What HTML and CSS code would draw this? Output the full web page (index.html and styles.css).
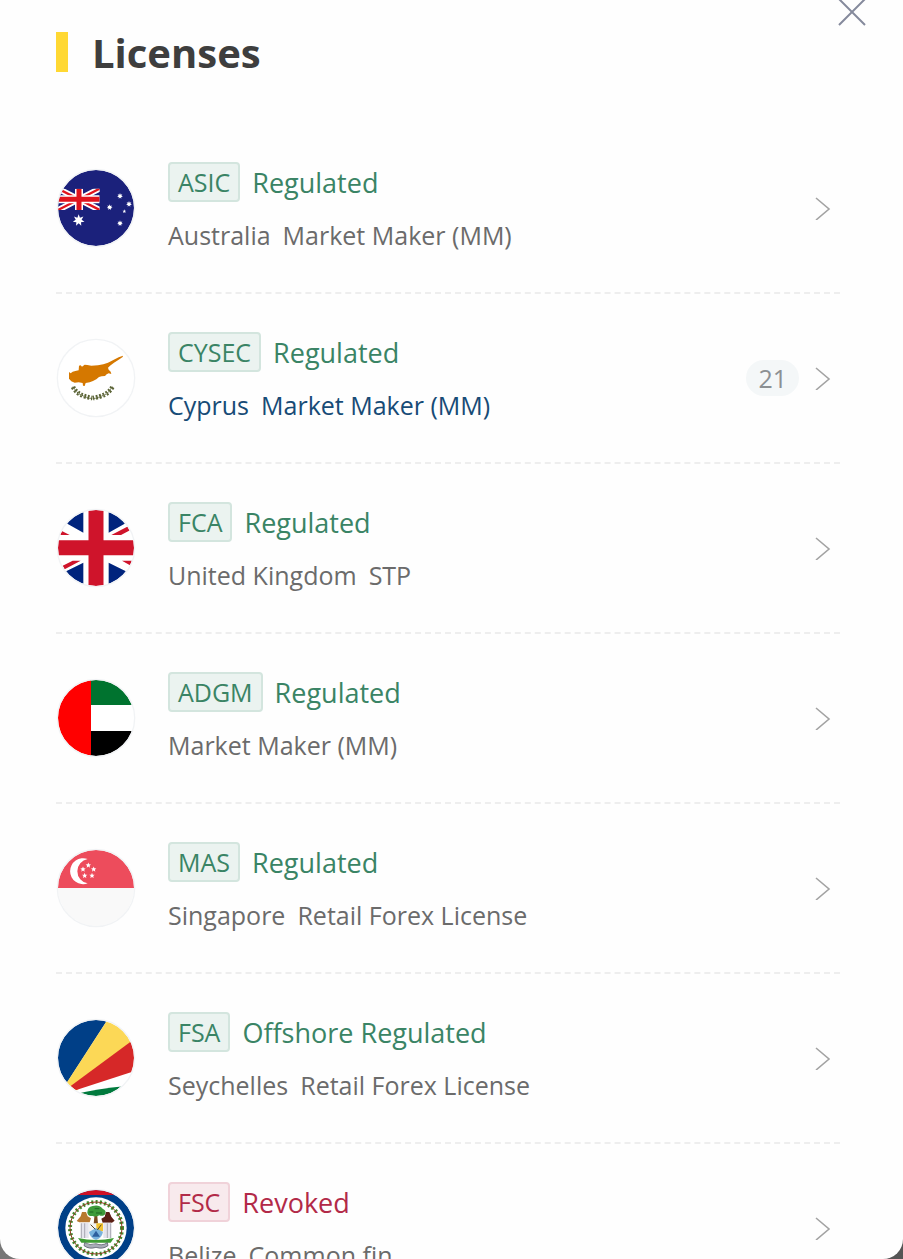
FILE: index.html
```html
<!DOCTYPE html>
<html lang="en">
<head>
    <meta charset="UTF-8">
    <meta name="viewport" content="width=device-width, initial-scale=1.0">
    <title>Licenses</title>
    <link rel="stylesheet" href="styles.css">
</head>
<body>
    <!-- shared shapes -->
    <svg class="sprite" aria-hidden="true">
        <defs>
            <clipPath id="round"><circle cx="138" cy="144" r="114"/></clipPath>
            <clipPath id="canton"><rect x="24" y="86" width="125" height="64"/></clipPath>
            <symbol id="arrow" viewBox="0 0 16 24">
                <path d="M1 2l13 11L1 24" fill="none" stroke="#a3a3a3" stroke-width="1.6"/>
            </symbol>
            <polygon id="star7" points="0,-18 3.9,-8.1 14.1,-11.2 8.8,-2 17.5,4 7,5.6 7.8,16.2 0,9 -7.8,16.2 -7,5.6 -17.5,4 -8.8,-2 -14.1,-11.2 -3.9,-8.1"/>
            <polygon id="star5" points="0,-8.5 2.3,-2.9 8,-2.6 3.6,1.2 5,7 0,3.8 -5,7 -3.6,1.2 -8,-2.6 -2.3,-2.9"/>
        </defs>
    </svg>

    <div class="dialog">
        <button class="close" type="button" aria-label="Close">
            <svg width="28" height="28" viewBox="0 0 28 28"><path d="M1 1l26 26M27 1L1 27" stroke="#858a9c" stroke-width="2"/></svg>
        </button>

        <h2 class="title">Licenses</h2>

        <div class="list">
            <a class="item" href="#asic">
                <svg class="flag" viewBox="18 24 240 240">
                    <g clip-path="url(#round)">
                        <rect x="18" y="24" width="240" height="240" fill="#1b217b"/>
                        <g clip-path="url(#canton)">
                            <path d="M24 86l125 64M149 86L24 150" stroke="#fff" stroke-width="18"/>
                            <path d="M24 86l125 64M149 86L24 150" stroke="#e0141e" stroke-width="7"/>
                            <path d="M87 86v64M24 118h125" stroke="#fff" stroke-width="24"/>
                            <path d="M87 86v64M24 118h125" stroke="#e0141e" stroke-width="15"/>
                        </g>
                        <g fill="#fff">
                            <use href="#star7" x="86" y="181"/>
                            <use href="#star7" transform="translate(210 108) scale(.5)"/>
                            <use href="#star7" transform="translate(179 142) scale(.5)"/>
                            <use href="#star7" transform="translate(237 132) scale(.5)"/>
                            <use href="#star7" transform="translate(210 190) scale(.5)"/>
                            <use href="#star5" transform="translate(223 154) scale(.7)"/>
                        </g>
                    </g>
                    <circle class="ring" cx="138" cy="144" r="116"/>
                </svg>
                <div class="info">
                    <div class="status"><span class="tag">ASIC</span><span>Regulated</span></div>
                    <div class="desc"><span>Australia</span><span>Market Maker (MM)</span></div>
                </div>
                <svg class="arrow"><use href="#arrow"/></svg>
            </a>

            <a class="item active" href="#cysec">
                <svg class="flag" viewBox="18 24 240 240">
                    <circle cx="138" cy="144" r="114" fill="#fff"/>
                    <path d="M57 126l5 4 6-5 8-2 10-2 1-14 5-1 4 4 8-6 8 1 12 2 20-1 16-3 14-5 16-8 16-8 13-5-1 4-12 8-14 9-12 9-6 6 2 6 6 6 2 7-8-2-6 3-5 5-10 1-8 2-8 7-10 5-10 4-12 2-3 9-5-1-1-8-12-2-12 1-10-4-7-8z" fill="#d57800"/>
                    <g fill="none" stroke="#5b6437">
                        <path d="M69 170q12 28 58 36M187 170q-12 28-58 36" stroke-width="3"/>
                        <path d="M69 171q14 27 58 33M187 171q-14 27-58 33" stroke-width="14" stroke-dasharray="6 5"/>
                    </g>
                    <path d="M72 176q14 22 50 27M184 176q-14 22-50 27" fill="none" stroke="#fff" stroke-width="2" stroke-dasharray="4 5"/>
                    <circle class="ring" cx="138" cy="144" r="116"/>
                </svg>
                <div class="info">
                    <div class="status"><span class="tag">CYSEC</span><span>Regulated</span></div>
                    <div class="desc"><span>Cyprus</span><span>Market Maker (MM)</span></div>
                </div>
                <span class="count">21</span>
                <svg class="arrow"><use href="#arrow"/></svg>
            </a>

            <a class="item" href="#fca">
                <svg class="flag" viewBox="18 24 240 240">
                    <g clip-path="url(#round)">
                        <rect x="18" y="24" width="240" height="240" fill="#fff"/>
                        <path d="M100 20v78L20 53V20zM176 20v78l80-45V20zM100 270v-82l-80 40v42zM176 270v-82l80 40v42z" fill="#00247d"/>
                        <path d="M34 92l25 13H20V86zM184 105l52-27 4 13-27 14zM38 197l30-15h24l-48 26zM216 182h42v24z" fill="#cf142b"/>
                        <path d="M138 24v240M18 143h240" stroke="#cf142b" stroke-width="45"/>
                    </g>
                    <circle class="ring" cx="138" cy="144" r="116"/>
                </svg>
                <div class="info">
                    <div class="status"><span class="tag">FCA</span><span>Regulated</span></div>
                    <div class="desc"><span>United Kingdom</span><span>STP</span></div>
                </div>
                <svg class="arrow"><use href="#arrow"/></svg>
            </a>

            <a class="item" href="#adgm">
                <svg class="flag" viewBox="18 24 240 240">
                    <g clip-path="url(#round)">
                        <rect x="18" y="24" width="240" height="240" fill="#fff"/>
                        <rect x="120" y="24" width="140" height="81" fill="#00732f"/>
                        <rect x="120" y="183" width="140" height="81" fill="#000"/>
                        <rect x="18" y="24" width="105" height="240" fill="#f00"/>
                    </g>
                    <circle class="ring" cx="138" cy="144" r="116"/>
                </svg>
                <div class="info">
                    <div class="status"><span class="tag">ADGM</span><span>Regulated</span></div>
                    <div class="desc"><span>Market Maker (MM)</span></div>
                </div>
                <svg class="arrow"><use href="#arrow"/></svg>
            </a>

            <a class="item" href="#mas">
                <svg class="flag" viewBox="18 24 240 240">
                    <g clip-path="url(#round)">
                        <rect x="18" y="24" width="240" height="240" fill="#f9f9f9"/>
                        <rect x="18" y="24" width="240" height="120" fill="#ed4c5c"/>
                        <path d="M113 57a39 39 0 1 0 0 73a37 37 0 0 1 0-73z" fill="#fff"/>
                        <g fill="#fff">
                            <use href="#star5" x="115" y="76"/>
                            <use href="#star5" x="99" y="88"/>
                            <use href="#star5" x="131" y="88"/>
                            <use href="#star5" x="104" y="107"/>
                            <use href="#star5" x="126" y="107"/>
                        </g>
                    </g>
                    <circle class="ring" cx="138" cy="144" r="116"/>
                </svg>
                <div class="info">
                    <div class="status"><span class="tag">MAS</span><span>Regulated</span></div>
                    <div class="desc"><span>Singapore</span><span>Retail Forex License</span></div>
                </div>
                <svg class="arrow"><use href="#arrow"/></svg>
            </a>

            <a class="item" href="#fsa">
                <svg class="flag" viewBox="18 24 240 240">
                    <g clip-path="url(#round)">
                        <rect x="18" y="24" width="240" height="240" fill="#fff"/>
                        <path d="M18 264V24h158L52 216z" fill="#003f87"/>
                        <path d="M176 24L40 234l40 8L260 82V24z" fill="#fcd856"/>
                        <path d="M260 82L62 228l-20 24L260 181z" fill="#d62828"/>
                        <path d="M70 254q70-18 160-26v40H70z" fill="#007a3d"/>
                    </g>
                    <circle class="ring" cx="138" cy="144" r="116"/>
                </svg>
                <div class="info">
                    <div class="status"><span class="tag">FSA</span><span>Offshore Regulated</span></div>
                    <div class="desc"><span>Seychelles</span><span>Retail Forex License</span></div>
                </div>
                <svg class="arrow"><use href="#arrow"/></svg>
            </a>

            <a class="item revoked" href="#fsc">
                <svg class="flag" viewBox="18 24 240 240">
                    <g clip-path="url(#round)">
                        <rect x="18" y="24" width="240" height="240" fill="#003f87"/>
                        <rect x="18" y="24" width="240" height="21" fill="#ce1126"/>
                        <rect x="18" y="243" width="240" height="21" fill="#ce1126"/>
                        <circle cx="138" cy="144" r="92" fill="#fff"/>
                        <circle cx="138" cy="144" r="78" fill="none" stroke="#3d8f2e" stroke-width="12" stroke-dasharray="6 7"/>
                        <circle cx="138" cy="144" r="78" fill="none" stroke="#8a3a1c" stroke-width="3"/>
                        <!-- tree -->
                        <path d="M134 100h7l3 32h-13z" fill="#7a4a1e"/>
                        <path d="M112 98q0-18 16-20 18-6 30 8 14 6 6 18-8 6-16 2-10 6-20 2-14 2-16-10z" fill="#3d9a3a"/>
                        <path d="M118 96h12M134 86h14M138 99h18" stroke="#1f6423" stroke-width="3"/>
                        <!-- men -->
                        <path d="M96 96h12l5 13 10 6-4 12H88l-8-4 12-14z" fill="#b8792e"/>
                        <path d="M168 96h10l6 14 10 12-8 6h-28l-4-12 10-6z" fill="#5a1f14"/>
                        <path d="M92 128h24v46H92zM160 128h24v46h-24z" fill="#e4e4ec"/>
                        <path d="M104 130v44M172 130v44M94 130v44M182 130v44" stroke="#8a8a94" stroke-width="2"/>
                        <!-- shield -->
                        <path d="M117 130h42v30q-4 16-21 22-17-6-21-22z" fill="#f2f2f2"/>
                        <path d="M139 130h20v24h-20z" fill="#f2c230"/>
                        <path d="M117 156l21-12 21 12q-4 18-21 24-17-6-21-24z" fill="#79b3dd"/>
                        <path d="M122 134l14 14M154 134l-12 16" stroke="#5c4a28" stroke-width="3"/>
                        <path d="M126 170l12-18 12 18z" fill="#2c5f9e"/>
                        <path d="M84 174q54 12 108 0l-10 14H94z" fill="#3f9c35"/>
                        <path d="M104 188q16 10 34 3 18 8 34-3l2 9q-16 12-36 5-20 7-36-5z" fill="#a9adb8" stroke="#454a58" stroke-width="2"/>
                    </g>
                    <circle class="ring" cx="138" cy="144" r="116"/>
                </svg>
                <div class="info">
                    <div class="status"><span class="tag">FSC</span><span>Revoked</span></div>
                    <div class="desc"><span>Belize</span><span>Common fin</span></div>
                </div>
                <svg class="arrow"><use href="#arrow"/></svg>
            </a>
        </div>
    </div>
</body>
</html>
```
FILE: styles.css
```css
* {
    box-sizing: border-box;
}

body {
    margin: 0;
    background: linear-gradient(to right, #777, #555);
    font-family: "Open Sans", "Noto Sans", sans-serif;
    overflow: hidden;
}

.sprite {
    position: absolute;
    width: 0;
    height: 0;
}

.dialog {
    position: relative;
    height: 100vh;
    padding: 32px 63px 0 56px;
    background: #fefefe;
    border-radius: 0 0 20px 20px;
    overflow: hidden;
}

.close {
    position: absolute;
    top: -2px;
    right: 37px;
    padding: 0;
    border: none;
    background: none;
    line-height: 0;
    cursor: pointer;
}

.title {
    display: flex;
    align-items: center;
    gap: 24px;
    height: 40px;
    margin: 0 0 52px;
    color: #3e3e3e;
    font-size: 40px;
    font-weight: 700;
}

.title::before {
    content: "";
    width: 12px;
    height: 40px;
    background: #ffd833;
}

.item {
    display: flex;
    align-items: center;
    padding: 38px 9px 38px 0;
    border-bottom: 2px dashed #eee;
    color: #6b6b6b;
    text-decoration: none;
}

.flag {
    flex: none;
    width: 80px;
    height: 80px;
    margin-right: 32px;
}

.ring {
    fill: none;
    stroke: #f1f3f5;
    stroke-width: 4;
}

.info {
    flex: 1;
}

.status,
.desc {
    display: flex;
    align-items: center;
    gap: 12px;
    white-space: nowrap;
}

.status {
    height: 40px;
    margin-bottom: 14px;
    color: #3a8465;
    font-size: 27px;
}

.tag {
    height: 40px;
    padding: 0 8px;
    border: 2px solid #d3e5de;
    border-radius: 4px;
    background: #ebf3f0;
    font-size: 25px;
    line-height: 36px;
}

.desc {
    height: 38px;
    font-size: 25px;
}

.active .desc {
    color: #174b76;
}

.revoked .status {
    color: #b22a48;
}

.revoked .tag {
    border-color: #f0d2d9;
    background: #f8eaed;
}

.count {
    height: 36px;
    margin-right: 16px;
    padding: 0 12px;
    border-radius: 18px;
    background: #f4f7f8;
    color: #8c9093;
    font-size: 25px;
    line-height: 36px;
}

.arrow {
    flex: none;
    width: 16px;
    height: 24px;
}
```
